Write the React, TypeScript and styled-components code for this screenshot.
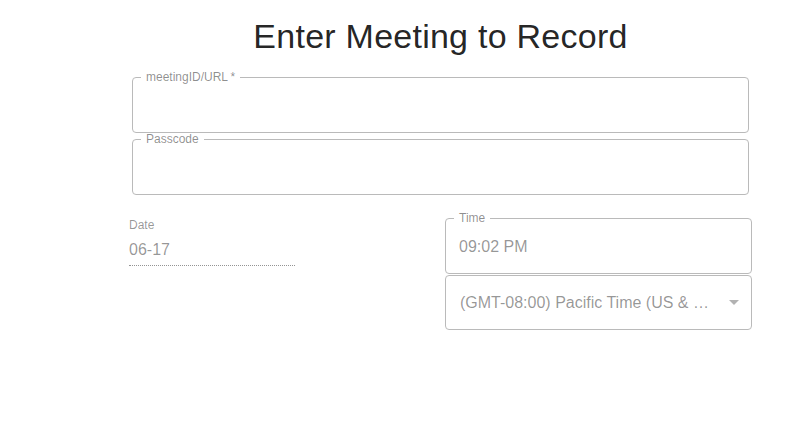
import React from 'react'
import styled, { createGlobalStyle } from 'styled-components'

const GlobalStyle = createGlobalStyle`
  html, body {
    margin: 0;
    background: #fff;
  }
  body {
    font-family: 'Liberation Sans', Arial, Helvetica, sans-serif;
  }
`

const Page = styled.main`
  padding: 15px 0 0 129px;
`

const Form = styled.div`
  width: 623px;
  display: flex;
  flex-direction: column;
`

const Title = styled.h1`
  margin: 0 0 15px;
  font-size: 34px;
  font-weight: 400;
  line-height: 42px;
  letter-spacing: 0.25px;
  text-align: center;
  color: rgba(0, 0, 0, 0.87);
`

const Stack = styled.div`
  display: flex;
  flex-direction: column;
  gap: 1px;
  padding: 0 3px;
`

// outlined field: the legend makes the notch in the border
const Outline = styled.fieldset`
  margin: 0;
  padding: 0 13px;
  border: 1px solid #bababa;
  border-radius: 4px;
  min-width: 0;
`

const Legend = styled.legend`
  margin-left: -5px;
  padding: 0 5px;
  height: 11px;
  font-size: 12px;
  line-height: 11px;
  color: rgba(0, 0, 0, 0.45);
`

const Input = styled.input`
  display: block;
  box-sizing: content-box;
  width: 100%;
  height: 23px;
  margin: 0;
  padding: 11px 0 15px;
  border: 0;
  outline: none;
  background: transparent;
  font: inherit;
  font-size: 16px;
  line-height: 23px;
  color: rgba(0, 0, 0, 0.42);
`

const Row = styled.div`
  display: grid;
  grid-template-columns: 1fr 1fr;
  margin-top: 18px;
`

const StandardField = styled.div`
  display: flex;
  flex-direction: column;
  width: 166px;
  padding-top: 6px;
`

const SmallLabel = styled.label`
  font-size: 12px;
  line-height: 12px;
  color: rgba(0, 0, 0, 0.42);
`

const UnderlinedValue = styled.div`
  margin-top: 7px;
  padding-bottom: 4px;
  font-size: 16px;
  line-height: 23px;
  color: rgba(0, 0, 0, 0.42);
  border-bottom: 1px dotted rgba(0, 0, 0, 0.42);
`

const RightColumn = styled.div`
  justify-self: end;
  width: 307px;
  display: flex;
  flex-direction: column;
  gap: 1px;
`

const SelectBox = styled.div`
  box-sizing: border-box;
  height: 55px;
  display: flex;
  align-items: center;
  padding: 0 5px 1px 14px;
  border: 1px solid #bababa;
  border-radius: 4px;
`

const SelectText = styled.span`
  flex: 1;
  min-width: 0;
  overflow: hidden;
  white-space: nowrap;
  text-overflow: ellipsis;
  font-size: 16px;
  line-height: 23px;
  color: rgba(0, 0, 0, 0.42);
`

const Arrow = styled.svg`
  flex: none;
  width: 24px;
  height: 24px;
  margin-left: 2px;
  fill: rgba(0, 0, 0, 0.3);
`

const OutlinedField: React.FC<{ label: string; value?: string }> = ({
  label,
  value,
}) => (
  <Outline>
    <Legend>{label}</Legend>
    <Input readOnly defaultValue={value ?? ''} aria-label={label} />
  </Outline>
)

export default function App() {
  return (
    <>
      <GlobalStyle />
      <Page>
        <Form>
          <Title>Enter Meeting to Record</Title>
          <Stack>
            <OutlinedField label={'meetingID/URL\u2009*'} />
            <OutlinedField label="Passcode" />
          </Stack>
          <Row>
            <StandardField>
              <SmallLabel>Date</SmallLabel>
              <UnderlinedValue>06-17</UnderlinedValue>
            </StandardField>
            <RightColumn>
              <OutlinedField label="Time" value="09:02 PM" />
              <SelectBox>
                <SelectText>(GMT-08:00) Pacific Time (US &amp; Canada)</SelectText>
                <Arrow viewBox="0 0 24 24">
                  <path d="M7 10l5 5 5-5z" />
                </Arrow>
              </SelectBox>
            </RightColumn>
          </Row>
        </Form>
      </Page>
    </>
  )
}
